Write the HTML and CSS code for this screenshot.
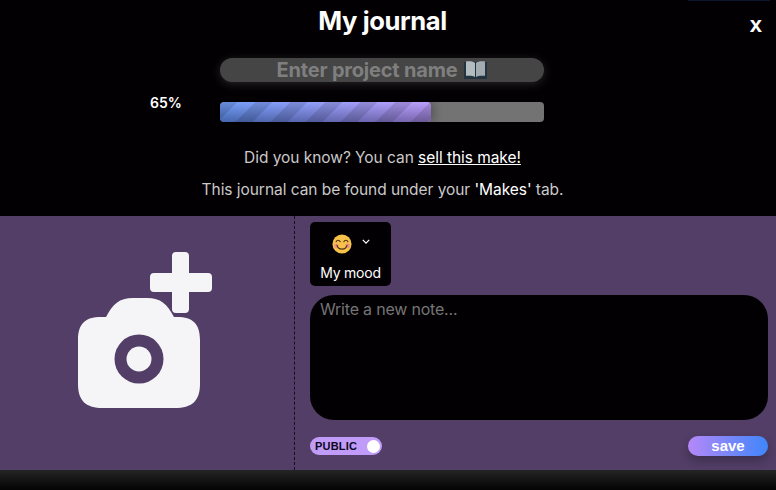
FILE: index.html
```html
<!DOCTYPE html>
<html lang="en">
<head>
    <meta charset="UTF-8">
    <meta name="viewport" content="width=device-width, initial-scale=1.0">
    <title>My journal</title>
    <link rel="stylesheet" href="styles.css">
</head>
<body>

<div class="journal">
    <header class="top">
        <h1 class="title">My journal</h1>
        <a href="#" class="closebtn">x</a>

        <div class="name-field">
            <span>Enter project name</span>
            <svg class="book" width="23" height="20" viewBox="0 0 23 20">
                <path d="M0 2h23v17H0z" fill="#22343f"/>
                <path d="M2 1.500C6 1 9.500 1.500 11 3V17C9.500 15.800 6 15.400 2 15.800z" fill="#b4bcc0"/>
                <path d="M21 1.500C17 1 13.500 1.500 12 3V17C13.500 15.800 17 15.400 21 15.800z" fill="#a3acb1"/>
            </svg>
        </div>

        <div class="progress-row">
            <span class="percent">65%</span>
            <div class="progress">
                <div class="progress-fill" style="width: 65%"></div>
            </div>
        </div>

        <p class="hint">Did you know? You can <a href="#">sell this make!</a></p>
        <p class="hint">This journal can be found under your <b>'Makes'</b> tab.</p>
    </header>

    <main class="body">
        <div class="photo">
            <svg width="136" height="160" viewBox="0 0 136 160">
                <!-- camara -->
                <path d="M29 65C36 52 42 46 56 46H70C84 46 90 52 97 65H100C116 65 123 72 123 88V132C123 149 115 156 98 156H26C9 156 1 149 1 132V88C1 72 8 65 24 65Z" fill="#f5f5f8"/>
                <circle cx="62" cy="107" r="24.500" fill="#523e66"/>
                <circle cx="62" cy="107" r="12.500" fill="#f5f5f8"/>
                <!-- signo de mas -->
                <path d="M99 0H108a4 4 0 0 1 4 4V21H131a4 4 0 0 1 4 4V36a4 4 0 0 1-4 4H112V57a4 4 0 0 1-4 4H99a4 4 0 0 1-4-4V40H77a4 4 0 0 1-4-4V25a4 4 0 0 1 4-4H95V4a4 4 0 0 1 4-4Z" fill="#f5f5f8" stroke="#523e66" stroke-width="1.500" paint-order="stroke"/>
            </svg>
        </div>

        <div class="note">
            <div class="mood">
                <div class="mood-icons">
                    <svg width="20" height="20" viewBox="0 0 22 22">
                        <circle cx="11" cy="11" r="10.500" fill="#f7c24a"/>
                        <circle cx="4.800" cy="13" r="2.600" fill="#f0937a"/>
                        <circle cx="17.200" cy="13" r="2.600" fill="#f0937a"/>
                        <path d="M4.500 8.500C5.500 6.300 8 6.300 9 8.500M13 8.500C14 6.300 16.500 6.300 17.500 8.500" fill="none" stroke="#503018" stroke-width="1.300" stroke-linecap="round"/>
                        <path d="M5.500 12.500C7 18 15 18 16.500 12.500" fill="none" stroke="#503018" stroke-width="1.300" stroke-linecap="round"/>
                    </svg>
                    <svg width="8" height="5" viewBox="0 0 10 6">
                        <path d="M1 1l4 4 4-4" fill="none" stroke="#fff" stroke-width="1.600"/>
                    </svg>
                </div>
                <span class="mood-label">My mood</span>
            </div>

            <textarea class="note-text" placeholder="Write a new note..."></textarea>

            <div class="note-actions">
                <div class="toggle">
                    <span>PUBLIC</span>
                    <span class="knob"></span>
                </div>
                <button class="save">save</button>
            </div>
        </div>
    </main>

    <footer class="bottom"></footer>
</div>

</body>
</html>
```

FILE: styles.css
```css
body {
    font-family: Inter, "Liberation Sans", sans-serif;
    margin: 0;
    padding: 0;
    background-color: #000;
    color: #fff;
}

.journal {
    width: 776px;
    height: 490px;
    display: flex;
    flex-direction: column;
    overflow: hidden;
}

.top {
    position: relative;
    height: 216px;
    box-sizing: border-box;
    background-color: #030003;
    text-align: center;
    padding: 4px 11px 0 0;
}

/* linea azul de arriba a la derecha */
.top::before {
    content: "";
    position: absolute;
    top: 0;
    right: 6px;
    width: 82px;
    height: 1px;
    background-color: #0a1632;
}

.title {
    margin: 0;
    font-size: 25.600px;
    font-weight: 700;
    line-height: 34px;
    letter-spacing: -0.400px;
}

.closebtn {
    position: absolute;
    top: 12px;
    right: 14px;
    color: #fff;
    font-family: "Liberation Sans", sans-serif;
    font-size: 22px;
    font-weight: 700;
    text-decoration: none;
}

.name-field {
    width: 324px;
    height: 24px;
    margin: 20px 0 0 220px;
    display: flex;
    align-items: center;
    justify-content: center;
    gap: 7px;
    background-color: #454545;
    border-radius: 12px;
    box-shadow: 0 2px 10px rgba(255, 255, 255, 0.14);
    color: #7f7f7f;
    font-size: 20px;
    font-weight: 700;
    letter-spacing: -0.200px;
}

.progress-row {
    display: flex;
    align-items: flex-start;
    margin-top: 20px;
    height: 20px;
}

.percent {
    width: 70px;
    margin: -8px 0 0 150px;
    text-align: left;
    font-size: 14px;
    font-weight: 600;
    line-height: 18px;
}

.progress {
    width: 324px;
    height: 20px;
    background-color: #737373;
    border-radius: 4px;
    overflow: hidden;
}

.progress-fill {
    height: 100%;
    border-radius: 4px;
    box-shadow: 3px 0 8px rgba(0, 0, 0, 0.25);
    background-image:
        linear-gradient(135deg, rgba(0, 0, 0, 0.12) 25%, transparent 25%, transparent 50%, rgba(0, 0, 0, 0.12) 50%, rgba(0, 0, 0, 0.12) 75%, transparent 75%),
        linear-gradient(to bottom, rgba(255, 255, 255, 0.12), rgba(0, 0, 0, 0.3)),
        linear-gradient(to right, #6092f8, #b492fa);
    background-size: 35px 35px, 100% 100%, 100% 100%;
}

.hint {
    margin: 0;
    font-size: 15.500px;
    line-height: 22px;
    color: #c9c9c9;
    letter-spacing: -0.050px;
}

.progress-row + .hint {
    margin-top: 25px;
}

.hint + .hint {
    margin-top: 10px;
}

.hint a,
.hint b {
    color: #fff;
    font-weight: 400;
}

.body {
    flex: 1;
    display: flex;
    background-color: #523e66;
}

.photo {
    width: 295px;
    flex-shrink: 0;
    box-sizing: border-box;
    border-right: 1px dashed #120d17;
    padding: 36px 0 0 77px;
}

.photo svg {
    overflow: visible;
}

.note {
    flex: 1;
    padding: 6px 8px 0 15px;
    display: flex;
    flex-direction: column;
}

.mood {
    width: 81px;
    height: 64px;
    box-sizing: border-box;
    background-color: #030003;
    border-radius: 5px;
    display: flex;
    flex-direction: column;
    align-items: center;
    padding-top: 12px;
}

.mood-icons {
    display: flex;
    align-items: flex-start;
    gap: 10px;
    height: 20px;
    padding-left: 1px;
}

.mood-icons svg + svg {
    margin-top: 5px;
}

.mood-label {
    margin-top: 10px;
    font-size: 14px;
    line-height: 18px;
    letter-spacing: -0.200px;
}

.note-text {
    display: block;
    width: 458px;
    height: 125px;
    margin-top: 9px;
    padding: 4px 10px;
    box-sizing: border-box;
    background-color: #030003;
    border: none;
    border-radius: 24px;
    resize: none;
    color: #fff;
    font-family: inherit;
    font-size: 16px;
    letter-spacing: -0.200px;
}

.note-text::placeholder {
    color: #757575;
}

.note-actions {
    display: flex;
    justify-content: space-between;
    align-items: center;
    margin-top: 16px;
}

.toggle {
    width: 72px;
    height: 18px;
    box-sizing: border-box;
    background-color: #c09cf8;
    border-radius: 9px;
    display: flex;
    align-items: center;
    justify-content: space-between;
    padding: 0 2px 0 5px;
    color: #0c0820;
    font-family: "Liberation Sans", sans-serif;
    font-size: 11px;
    font-weight: 700;
    letter-spacing: 0.200px;
}

.knob {
    width: 13px;
    height: 13px;
    background-color: #fff;
    border-radius: 50%;
}

.save {
    width: 80px;
    height: 20px;
    padding: 0 0 2px;
    border: none;
    border-radius: 10px;
    background: linear-gradient(to right, #b588f8, #3f86fb);
    box-shadow: 0 5px 10px rgba(0, 0, 0, 0.25);
    color: #fff;
    font-family: "Liberation Sans", sans-serif;
    font-size: 15px;
    font-weight: 700;
    cursor: pointer;
}

.bottom {
    height: 20px;
    background: linear-gradient(to bottom, #252525, #030303);
}
```
